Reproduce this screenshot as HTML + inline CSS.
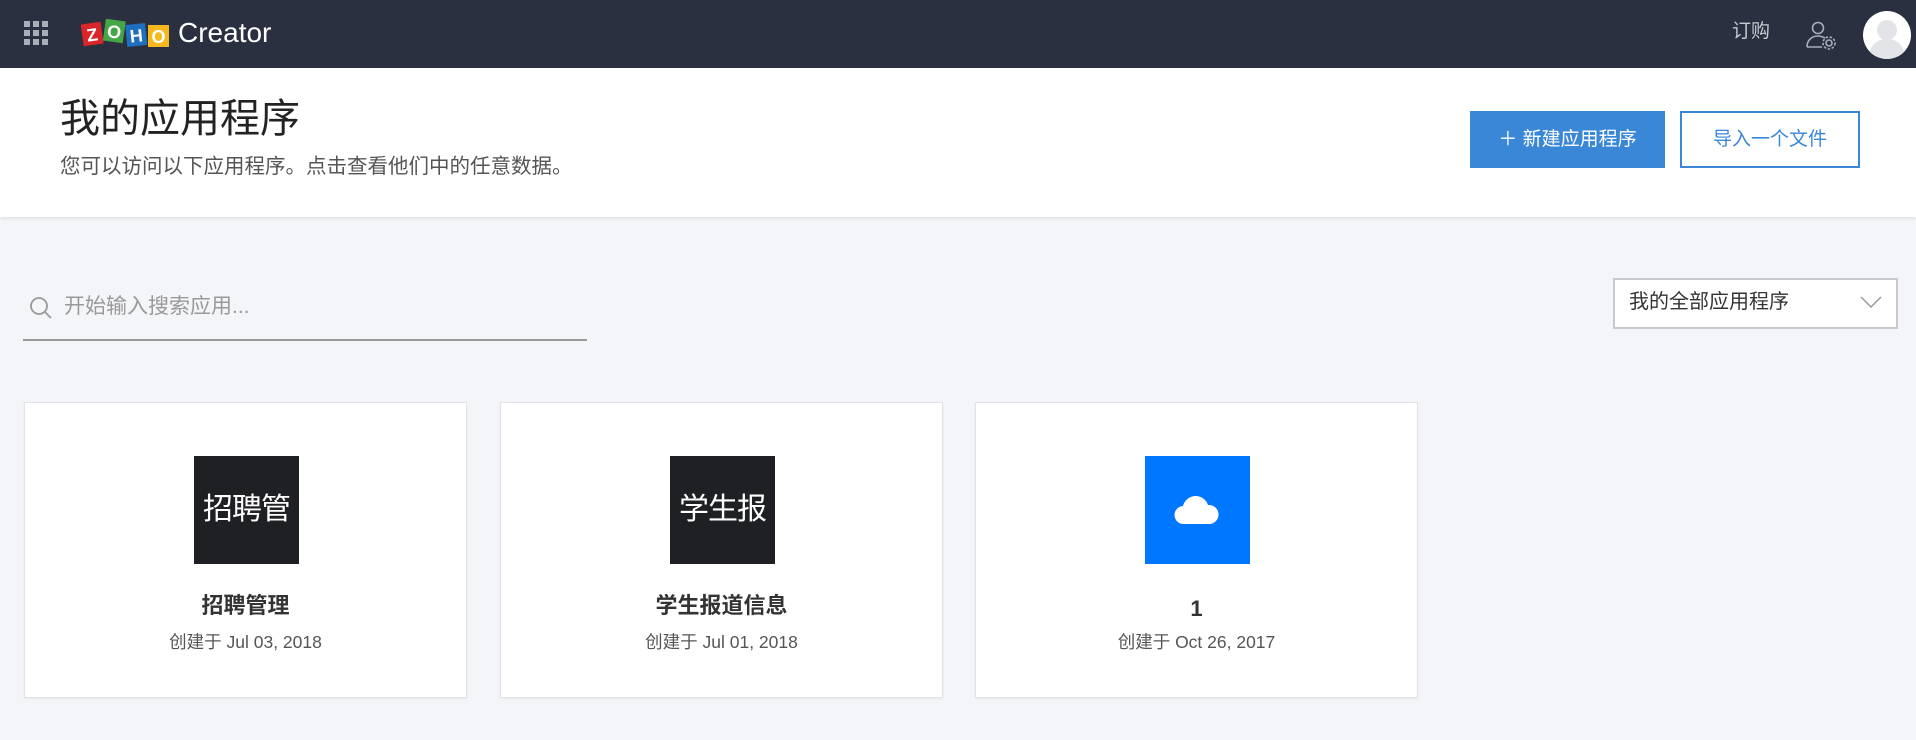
<!DOCTYPE html>
<html><head><meta charset="utf-8"><style>
*{margin:0;padding:0;box-sizing:border-box}
body{width:1916px;height:740px;overflow:hidden;background:#f4f5f8;font-family:"Liberation Sans","Noto Sans CJK SC",sans-serif;position:relative}
.abs{position:absolute}
.hdr{left:0;top:0;width:1916px;height:68px;background:#2a3040}
.card{position:absolute;top:402px;width:443px;height:296px;background:#fff;border:1px solid #e2e3e6;box-shadow:0 1px 2px rgba(0,0,0,.06)}
.ic{position:absolute;left:169px;top:53px;width:105px;height:108px;background:#1f2024;color:#fff;font-size:30px;line-height:108px;text-align:center;letter-spacing:-1px}
.t{position:absolute;left:0;width:100%;top:188px;height:30px;line-height:30px;text-align:center;font-size:22px;font-weight:bold;color:#333}
.d{position:absolute;left:0;width:100%;top:227px;line-height:24px;text-align:center;font-size:17.5px;color:#555}
</style></head><body>
<div class="abs hdr"></div>
<svg class="abs" style="left:24px;top:21px" width="24" height="24"><g fill="#a9adb8"><rect x="0" y="0" width="6" height="6"/><rect x="9" y="0" width="6" height="6"/><rect x="18" y="0" width="6" height="6"/><rect x="0" y="9" width="6" height="6"/><rect x="9" y="9" width="6" height="6"/><rect x="18" y="9" width="6" height="6"/><rect x="0" y="18" width="6" height="6"/><rect x="9" y="18" width="6" height="6"/><rect x="18" y="18" width="6" height="6"/></g></svg>
<svg class="abs" style="left:80px;top:17px" width="92" height="32">
<g transform="rotate(-8 12 16)"><rect x="2" y="6" width="20" height="22" fill="#d9262a"/><text x="12" y="24" fill="#fff" font-size="18" font-weight="bold" text-anchor="middle" font-family="Liberation Sans">Z</text></g>
<g transform="rotate(8 34 16)"><rect x="24" y="3" width="20" height="22" fill="#44a646"/><text x="34" y="21" fill="#fff" font-size="18" font-weight="bold" text-anchor="middle" font-family="Liberation Sans">O</text></g>
<g transform="rotate(-6 56 16)"><rect x="46" y="7" width="20" height="22" fill="#1f6fbf"/><text x="56" y="25" fill="#fff" font-size="18" font-weight="bold" text-anchor="middle" font-family="Liberation Sans">H</text></g>
<rect x="68" y="8" width="21" height="22" fill="#f5b91e"/><text x="78.5" y="26" fill="#fff" font-size="18" font-weight="bold" text-anchor="middle" font-family="Liberation Sans">O</text>
</svg>
<div class="abs" style="left:178px;top:17px;font-size:28px;color:#fff;line-height:32px">Creator</div>
<div class="abs" style="left:1732px;top:20px;font-size:19px;color:#c8cad0;line-height:24px">订购</div>
<svg class="abs" style="left:1806px;top:21px" width="32" height="30" fill="none" stroke="#a9adb8" stroke-width="1.6"><circle cx="12" cy="7" r="5.5"/><path d="M1 26c0-7 5-11 11-11 3 0 5 1 7 2M1 26h15"/><circle cx="23" cy="22" r="3"/><circle cx="23" cy="22" r="6" stroke-dasharray="2.5 1.6"/></svg>
<div class="abs" style="left:1863px;top:11px;width:48px;height:48px;border-radius:50%;background:#fff;overflow:hidden"><svg width="48" height="48"><circle cx="24" cy="19" r="10" fill="#e3e4e8"/><path d="M6 48c0-14 8-20 18-20s18 6 18 20z" fill="#e3e4e8"/></svg></div>
<div class="abs" style="left:0;top:68px;width:1916px;height:149px;background:#fff;box-shadow:0 2px 3px rgba(0,0,0,.08)"></div>
<div class="abs" style="left:60px;top:96px;font-size:40px;color:#222;line-height:46px">我的应用程序</div>
<div class="abs" style="left:60px;top:154px;font-size:20.5px;color:#555;line-height:26px">您可以访问以下应用程序。点击查看他们中的任意数据。</div>
<div class="abs" style="left:1470px;top:111px;width:195px;height:57px;background:#3a87d8;color:#fff;font-size:19px;line-height:57px;text-align:center">＋ 新建应用程序</div>
<div class="abs" style="left:1680px;top:111px;width:180px;height:57px;border:2px solid #3a87d8;background:#fff;color:#3a87d8;font-size:19px;line-height:53px;text-align:center">导入一个文件</div>
<svg class="abs" style="left:29px;top:296px" width="24" height="24" fill="none" stroke="#999" stroke-width="1.8"><circle cx="10" cy="10" r="8"/><path d="M16 16l6 6"/></svg>
<div class="abs" style="left:64px;top:294px;font-size:21px;color:#999;line-height:26px">开始输入搜索应用...</div>
<div class="abs" style="left:23px;top:339px;width:564px;height:2px;background:#999"></div>
<div class="abs" style="left:1613px;top:278px;width:285px;height:51px;border:2px solid #c8c9cd;background:#fff"></div>
<div class="abs" style="left:1629px;top:289px;font-size:20px;color:#333;line-height:26px">我的全部应用程序</div>
<svg class="abs" style="left:1860px;top:295px" width="22" height="14" fill="none" stroke="#999" stroke-width="1.5"><path d="M1 2l10 10 10-10"/></svg>
<div class="card" style="left:24px"><div class="ic">招聘管</div><div class="t">招聘管理</div><div class="d">创建于 Jul 03, 2018</div></div>
<div class="card" style="left:500px"><div class="ic">学生报</div><div class="t">学生报道信息</div><div class="d">创建于 Jul 01, 2018</div></div>
<div class="card" style="left:975px"><div class="ic" style="background:#0077ff"><svg style="position:absolute;left:29px;top:37px" width="46" height="32"><path d="M10 31a9 9 0 0 1-1-18 13 13 0 0 1 25-1 9 9 0 0 1 2 19z" fill="#fff"/></svg></div><div class="t" style="top:191px">1</div><div class="d">创建于 Oct 26, 2017</div></div>
</body></html>
